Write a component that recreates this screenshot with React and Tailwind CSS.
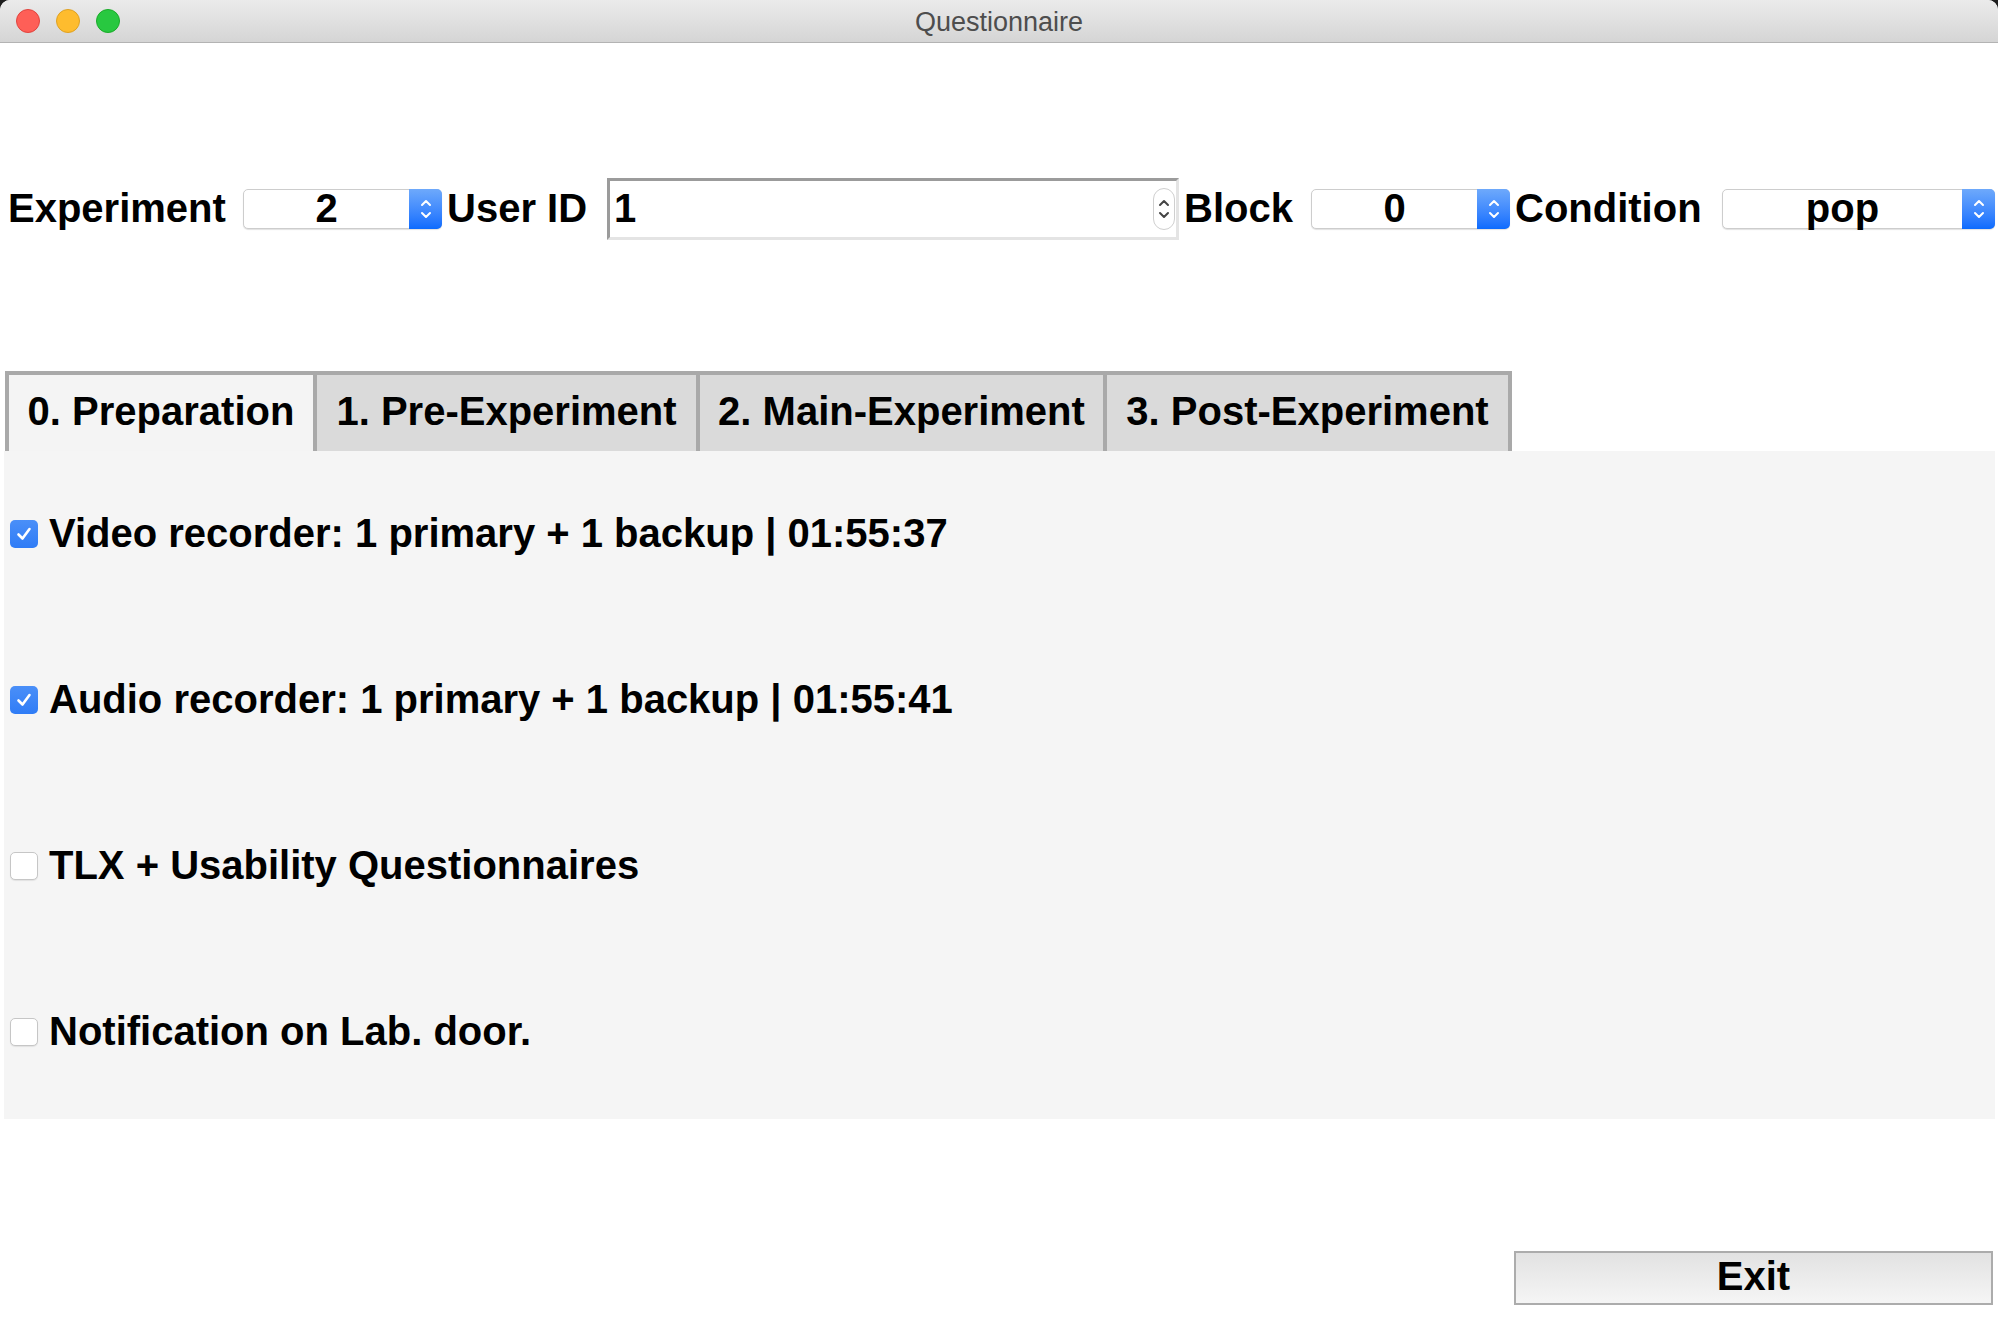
import React from 'react';

const font = { fontFamily: '"Liberation Sans", Arial, sans-serif' };

function Chevrons({ color }) {
  return (
    <svg width="14" height="28" viewBox="0 0 14 28" fill="none" stroke={color} strokeWidth="2" strokeLinecap="round" strokeLinejoin="round">
      <path d="M3 10 L7 6 L11 10" />
      <path d="M3 18 L7 22 L11 18" />
    </svg>
  );
}

function Spin({ value, width }) {
  return (
    <div className={`flex h-[40px] ${width} rounded-[5px] border border-[#cdcdcd] bg-white shadow-[0_1px_1px_rgba(0,0,0,0.12)]`}>
      <div className="flex flex-1 items-center justify-center pb-[3px] text-[40px] font-bold leading-none text-black">{value}</div>
      <div className="-my-px -mr-px flex w-[33px] items-center justify-center rounded-r-[5px] bg-gradient-to-b from-[#6ea9fb] to-[#0a6bfe]">
        <Chevrons color="#ffffff" />
      </div>
    </div>
  );
}

function Check({ checked, label }) {
  return (
    <div className="flex h-[166px] items-center pl-[6px]">
      {checked ? (
        <div className="flex h-[28px] w-[28px] items-center justify-center rounded-[5px] bg-gradient-to-b from-[#4a8ff8] to-[#2f7cf6]">
          <svg width="20" height="20" viewBox="0 0 20 20" fill="none" stroke="#ffffff" strokeWidth="2.6" strokeLinecap="round" strokeLinejoin="round">
            <path d="M4.5 10.5 L8.5 14.5 L15.5 5" />
          </svg>
        </div>
      ) : (
        <div className="h-[28px] w-[28px] rounded-[5px] border border-[#c6c6c6] bg-white shadow-[0_1px_1px_rgba(0,0,0,0.08)]" />
      )}
      <span className="ml-[11px] pb-[3px] text-[40px] font-bold leading-none text-black">{label}</span>
    </div>
  );
}

export default function App() {
  const tabs = [
    { name: '0. Preparation', w: 'w-[308px]', active: true },
    { name: '1. Pre-Experiment', w: 'w-[383px]' },
    { name: '2. Main-Experiment', w: 'w-[407px]' },
    { name: '3. Post-Experiment', w: 'w-[409px] border-r-[4px]' },
  ];

  return (
    <div className="h-[1338px] w-[1998px] bg-[#1e1e1e]" style={font}>
      <div className="flex h-[1338px] flex-col overflow-hidden rounded-t-[10px] bg-white">
        {/* title bar */}
        <div className="relative flex h-[43px] items-center border-b border-[#b3b3b3] bg-gradient-to-b from-[#ebebeb] to-[#d5d5d5]">
          <div className="flex gap-[16px] pl-[16px]">
            <span className="h-[24px] w-[24px] rounded-full border border-[#e0443e] bg-[#fe5f57]" />
            <span className="h-[24px] w-[24px] rounded-full border border-[#dea123] bg-[#febc2e]" />
            <span className="h-[24px] w-[24px] rounded-full border border-[#1aab29] bg-[#28c840]" />
          </div>
          <div className="absolute inset-0 flex items-center justify-center pt-[3px] text-[27px] text-[#4d4d4d]">Questionnaire</div>
        </div>

        {/* top controls */}
        <div className="mt-[135px] flex h-[62px] items-center">
          <div className="w-[243px] pb-[3px] pl-[8px] text-[40px] font-bold leading-none">Experiment</div>
          <Spin value="2" width="w-[199px]" />
          <div className="w-[165px] pb-[3px] pl-[5px] text-[40px] font-bold leading-none">User ID</div>
          <div className="flex h-[62px] w-[572px] items-center border-[3px] border-t-[#9b9b9b] border-l-[#9b9b9b] border-b-[#e4e4e4] border-r-[#e4e4e4] bg-white pl-[4px]">
            <span className="pb-[3px] text-[40px] font-bold leading-none">1</span>
            <div className="ml-auto mr-[1px] flex h-[42px] w-[22px] items-center justify-center rounded-[11px] border border-[#cfcfcf] bg-white">
              <Chevrons color="#444444" />
            </div>
          </div>
          <div className="w-[132px] pb-[3px] pl-[5px] text-[40px] font-bold leading-none">Block</div>
          <Spin value="0" width="w-[199px]" />
          <div className="w-[212px] pb-[3px] pl-[5px] text-[40px] font-bold leading-none">Condition</div>
          <Spin value="pop" width="w-[273px]" />
        </div>

        {/* tabs */}
        <div className="mt-[131px] flex pl-[5px]">
          {tabs.map((t) => (
            <div
              key={t.name}
              className={`flex h-[80px] ${t.w} items-center justify-center border-t-[4px] border-l-[4px] border-[#a9a9a9] pb-[5px] text-[40px] font-bold leading-none ${t.active ? 'bg-[#f4f4f4]' : 'bg-[#dadada]'}`}
            >
              {t.name}
            </div>
          ))}
        </div>

        {/* panel */}
        <div className="ml-[4px] flex h-[668px] w-[1991px] flex-col bg-[#f5f5f5]">
          <Check checked label="Video recorder: 1 primary + 1 backup | 01:55:37" />
          <Check checked label="Audio recorder: 1 primary + 1 backup | 01:55:41" />
          <Check label="TLX + Usability Questionnaires" />
          <Check label="Notification on Lab. door." />
        </div>

        {/* exit */}
        <div className="mt-[132px] flex justify-end pr-[5px]">
          <button className="flex h-[54px] w-[479px] items-center justify-center border-2 border-[#acacac] bg-gradient-to-b from-[#e2e2e2] to-[#f5f5f5] pb-[5px] text-[40px] font-bold leading-none text-black">
            Exit
          </button>
        </div>
      </div>
    </div>
  );
}
